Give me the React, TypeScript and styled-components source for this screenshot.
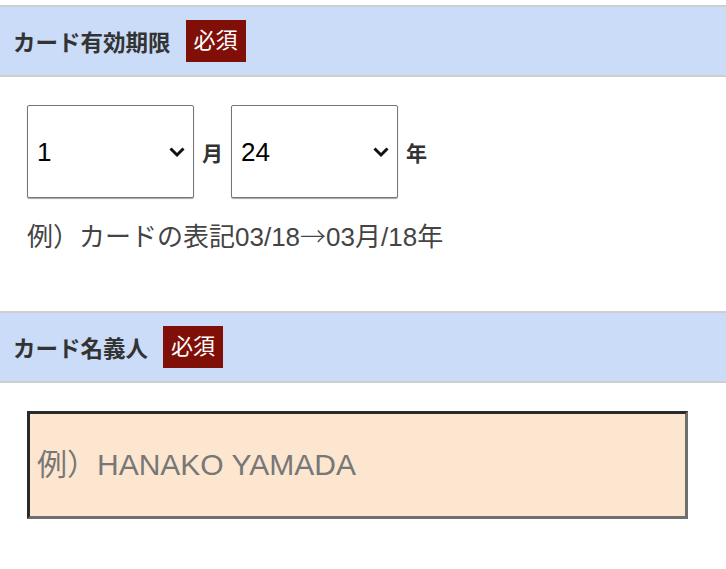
import styled, { createGlobalStyle } from "styled-components";

const GlobalStyle = createGlobalStyle`
  body {
    margin: 0;
    background: #fff;
    font-family: "Liberation Sans", "Noto Sans CJK JP", sans-serif;
  }
`;

const Page = styled.div`
  padding-top: 5px;
`;

const SectionHeader = styled.div`
  display: flex;
  align-items: center;
  height: 68px;
  padding-left: 13px;
  background: #cadcf8;
  border-top: 2px solid #cfcfcf;
  border-bottom: 2px solid #cfcfcf;
`;

const Title = styled.span`
  font-size: 22.5px;
  font-weight: 700;
  color: #333;
`;

const Badge = styled.span`
  margin-left: 15px;
  height: 42px;
  line-height: 42px;
  padding: 0 8px;
  background: #7f0f07;
  color: #fff;
  font-size: 22px;
  font-weight: 400;
`;

const Body = styled.div<{ $bottom: number }>`
  padding: 28px 27px ${(props) => props.$bottom}px;
`;

const SelectRow = styled.div`
  display: flex;
  align-items: center;
`;

const SelectBox = styled.div`
  position: relative;
  width: 167px;
  height: 93px;
`;

const Select = styled.select`
  appearance: none;
  -webkit-appearance: none;
  box-sizing: border-box;
  width: 100%;
  height: 100%;
  padding: 0 0 0 9px;
  border: 1px solid #767676;
  border-radius: 2px;
  box-shadow: 0 1px 1px rgba(0, 0, 0, 0.35);
  background: #fff;
  color: #000;
  font-family: "Liberation Sans", sans-serif;
  font-size: 26px;
`;

const Chevron = styled.svg`
  position: absolute;
  right: 8px;
  top: 50%;
  margin-top: -6px;
  width: 18px;
  height: 12px;
  pointer-events: none;
`;

const Unit = styled.span`
  margin: 0 8px;
  font-size: 21px;
  font-weight: 700;
  color: #333;
`;

const Note = styled.p`
  margin: 17px 0 0;
  font-size: 26px;
  line-height: 40px;
  color: #444;
`;

const Arrow = styled.span`
  font-family: "Noto Sans CJK JP", sans-serif;
  font-weight: 300;
`;

const NameInput = styled.input`
  box-sizing: border-box;
  display: block;
  width: 661px;
  height: 108px;
  padding: 0 0 0 7px;
  border-style: solid;
  border-width: 3px;
  border-color: #2a2a2a #6f6f6f #6f6f6f #2a2a2a;
  background: #fde6cf;
  font-family: "Liberation Sans", "Noto Sans CJK JP", sans-serif;
  font-size: 30px;
  color: #222;
  outline: none;
  &::placeholder {
    color: #777;
  }
`;

const DropDown = ({ value, options }: { value: string; options: string[] }) => (
  <SelectBox>
    <Select defaultValue={value}>
      {options.map((o) => (
        <option key={o} value={o}>
          {o}
        </option>
      ))}
    </Select>
    <Chevron viewBox="0 0 18 12">
      <path d="M2.5 2.5 L9 9 L15.5 2.5" fill="none" stroke="#111" strokeWidth="3" />
    </Chevron>
  </SelectBox>
);

const months = Array.from({ length: 12 }, (_, i) => String(i + 1));
const years = Array.from({ length: 11 }, (_, i) => String(24 + i));

export default function App() {
  return (
    <Page>
      <GlobalStyle />
      <SectionHeader>
        <Title>カード有効期限</Title>
        <Badge>必須</Badge>
      </SectionHeader>
      <Body $bottom={54}>
        <SelectRow>
          <DropDown value="1" options={months} />
          <Unit>月</Unit>
          <DropDown value="24" options={years} />
          <Unit>年</Unit>
        </SelectRow>
        <Note>
          例）カードの表記03/18<Arrow>→</Arrow>03月/18年
        </Note>
      </Body>
      <SectionHeader>
        <Title>カード名義人</Title>
        <Badge>必須</Badge>
      </SectionHeader>
      <Body $bottom={40}>
        <NameInput placeholder="例）HANAKO YAMADA" />
      </Body>
    </Page>
  );
}
